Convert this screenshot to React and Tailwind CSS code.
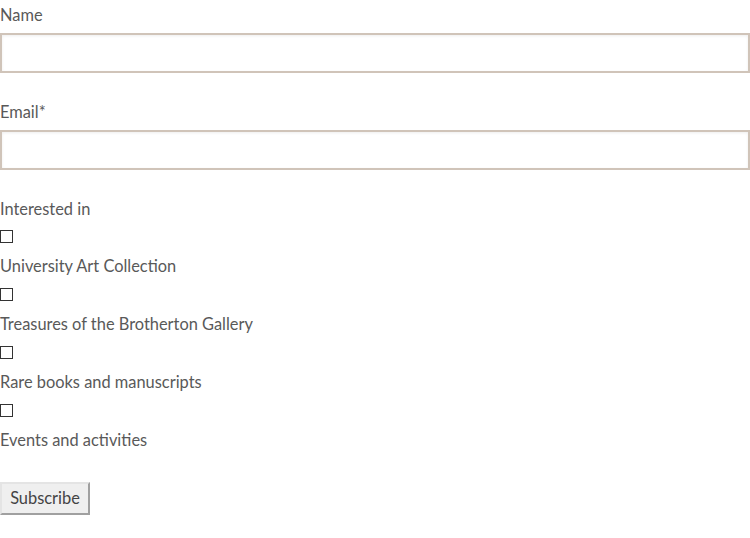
import React from "react";

const font = { fontFamily: "Lato, 'Open Sans', sans-serif" };

function Check({ label }) {
  return (
    <div className="flex flex-col">
      <input type="checkbox" className="appearance-none m-0 w-[13px] h-[13px] border border-[#333] bg-white" />
      <label className="mt-[11px] mb-[10px] text-[16.4px] leading-[24px] text-[#595959]">{label}</label>
    </div>
  );
}

export default function App() {
  return (
    <div className="w-[750px] h-[538px] bg-white overflow-hidden" style={font}>
      <form className="flex flex-col pt-[3px]">
        <label className="text-[16.4px] leading-[24px] text-[#595959] mb-[6px]">Name</label>
        <input type="text" className="h-[40px] w-full border-2 border-[#d0c4b9] bg-white shadow-[inset_0_1px_3px_rgba(0,0,0,0.07)] outline-none" />
        <label className="mt-[27px] text-[16.4px] leading-[24px] text-[#595959] mb-[6px]">Email*</label>
        <input type="email" className="h-[40px] w-full border-2 border-[#d0c4b9] bg-white shadow-[inset_0_1px_3px_rgba(0,0,0,0.07)] outline-none" />
        <div className="mt-[27px] text-[16.4px] leading-[24px] text-[#595959] mb-[9px]">Interested in</div>
        <Check label="University Art Collection" />
        <Check label="Treasures of the Brotherton Gallery" />
        <Check label="Rare books and manuscripts" />
        <Check label="Events and activities" />
        <div className="mt-[20px]">
          <button type="button" className="h-[33px] w-[90px] bg-[#efefef] border-2 border-t-[#e4e4e4] border-l-[#e4e4e4] border-r-[#a0a0a0] border-b-[#a0a0a0] text-[16.4px] text-[#444]" style={font}>
            Subscribe
          </button>
        </div>
      </form>
    </div>
  );
}
